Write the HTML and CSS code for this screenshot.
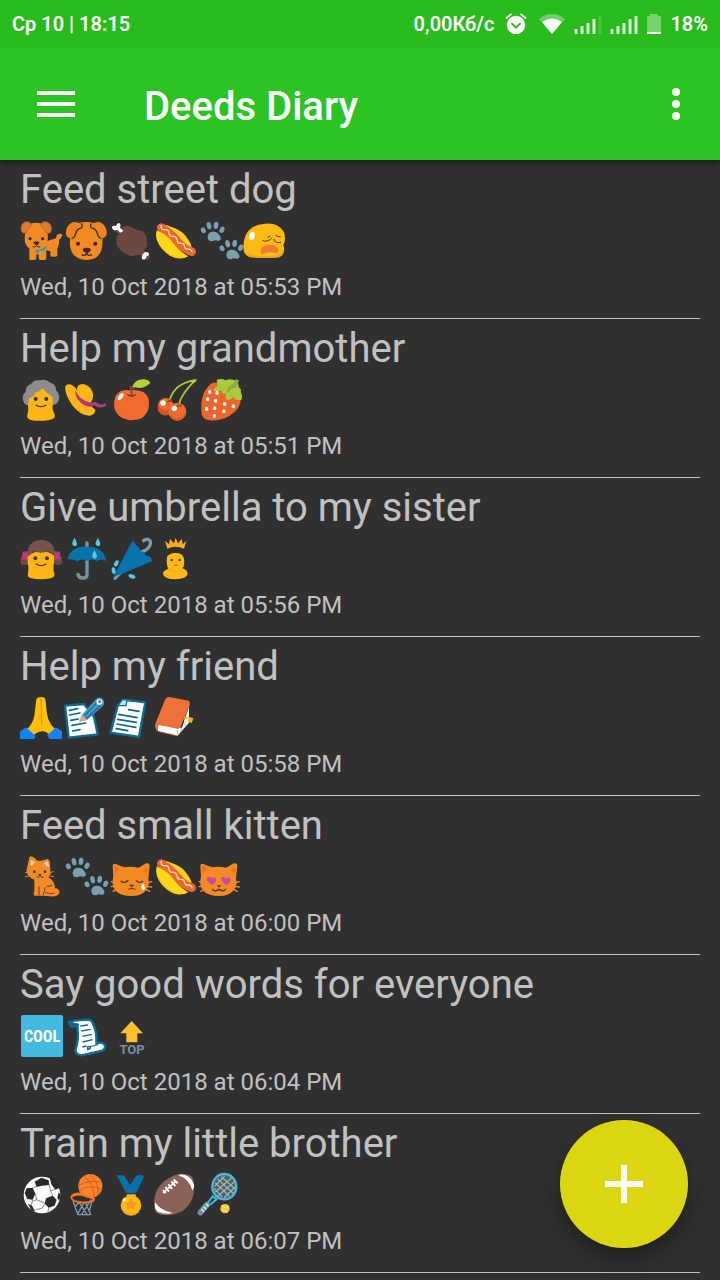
FILE: index.html
```html
<!DOCTYPE html>
<html lang="en">
<head>
    <meta charset="UTF-8">
    <meta name="viewport" content="width=device-width, initial-scale=1.0">
    <title>Deeds Diary</title>
    <link rel="stylesheet" href="styles.css">
</head>
<body>

<!-- Emoji set -->
<svg class="sprite" aria-hidden="true">
    <symbol id="dog" viewBox="0 0 135 126">
        <path d="M82 66C96 60 103 61 109 56Q108 47 116 45Q129 43 126 51Q123 60 117 62Q119 78 112 88V109Q112 113 106 113H95Q91 113 91 108V97L79 94V117Q79 123 73 123H61Q57 123 56 117V107L49 106V117Q49 123 43 123H31Q27 123 28 116V82Z" fill="#f38a24"/>
        <path d="M17 35Q20 11 48 11Q76 11 81 35Q88 64 77 80Q67 93 48 94Q22 92 16 73Q12 57 17 35" fill="#f38a24"/>
        <path d="M34 15Q26 5 14 9Q3 14 3 29Q4 43 13 43Q20 43 22 34Q24 27 32 23ZM62 15Q70 5 82 9Q94 14 95 29Q94 43 84 43Q76 43 75 34Q73 27 64 23Z" fill="#e07a2b" stroke="#8b5a35" stroke-width="2"/>
        <path d="M45 94Q66 95 80 79L79 88Q69 101 49 101Z" fill="#4298ad"/>
        <circle cx="61" cy="100" r="4" fill="#65c6e2"/>
        <g fill="#3b2b29"><circle cx="30" cy="59" r="5"/><circle cx="68" cy="59" r="5"/><path d="M40 70Q49 64 58 70Q56 79 49 79Q42 78 40 70"/></g>
        <path d="M38 83Q44 87 49 80Q54 87 61 83" fill="none" stroke="#3b2b29" stroke-width="3"/>
    </symbol>
    <symbol id="puppy" viewBox="0 0 135 126">
        <path d="M25 20Q44 8 64 9Q85 8 105 20Q115 48 112 77Q109 122 65 123Q18 121 15 77Q13 48 25 20" fill="#f38a24"/>
        <path d="M48 17Q38 6 23 10Q6 17 3 36Q0 53 14 58Q27 59 31 43Q33 32 46 25ZM81 17Q91 6 106 10Q121 17 125 36Q127 53 114 58Q101 59 98 43Q95 32 83 25Z" fill="#ee8425"/>
        <path d="M49 13Q57 25 43 29Q34 33 32 44Q29 57 20 59M79 13Q71 25 86 29Q95 33 97 44Q100 57 109 59" fill="none" stroke="#3b3029" stroke-width="4"/>
        <g fill="#3b2b29"><circle cx="39" cy="74" r="6"/><circle cx="91" cy="74" r="6"/><path d="M53 90Q65 82 78 90Q77 101 65 102Q54 101 53 90"/></g>
        <path d="M50 107Q60 113 65 103Q70 113 81 107" fill="none" stroke="#3b2b29" stroke-width="4"/>
    </symbol>
    <symbol id="meat" viewBox="0 0 135 126">
        <path d="M17 27L36 41M96 100L110 113" stroke="#694640" stroke-width="18" stroke-linecap="round"/>
        <path d="M38 25Q50 17 66 25Q79 34 97 36Q112 48 110 69Q115 81 103 93Q96 106 79 109Q65 114 51 107Q35 101 27 88Q17 79 20 63Q18 48 30 44Q29 34 38 25" fill="#6d4840"/>
        <path d="M22 14Q27 9 31 16Q32 22 30 26L40 35Q36 42 29 40L22 32Q16 36 10 32Q3 27 8 21Q14 20 18 21ZM95 118Q96 101 108 99Q121 100 116 109Q108 111 107 119Q99 125 95 118" fill="#fff"/>
    </symbol>
    <symbol id="hotdog" viewBox="0 0 135 126">
        <path d="M22 16Q36 18 52 25Q84 35 100 62Q108 72 110 84L84 96L20 36Z" fill="#f9ce1d"/>
        <path d="M19 26Q44 40 64 63Q84 90 110 98" fill="none" stroke="#ee672f" stroke-width="26" stroke-linecap="round"/>
        <path d="M18 19Q18 34 30 32Q40 30 42 42Q43 54 54 52Q64 51 66 63Q68 75 78 73Q88 72 89 83Q91 92 100 90Q108 90 111 98" fill="none" stroke="#ffe2b2" stroke-width="4" stroke-linecap="round"/>
        <path d="M5 34Q36 47 55 72Q76 99 100 112Q76 125 49 112Q17 95 6 64Q1 49 5 34" fill="#ffd817"/>
        <path d="M13 68Q26 95 54 109Q75 117 92 112Q72 124 48 111Q20 94 13 68" fill="#f6c719"/>
    </symbol>
    <symbol id="paws" viewBox="0 0 135 126">
        <g id="paw" fill="#78a0ae">
            <ellipse cx="10" cy="34" rx="7" ry="9" transform="rotate(-28 10 34)"/>
            <ellipse cx="27" cy="20" rx="7" ry="11" transform="rotate(-13 27 20)"/>
            <ellipse cx="48" cy="19" rx="7" ry="11" transform="rotate(9 48 19)"/>
            <ellipse cx="66" cy="32" rx="7" ry="10" transform="rotate(25 66 32)"/>
            <path d="M23 53Q24 39 38 38Q53 37 60 51Q67 63 55 66Q46 61 39 66Q23 69 23 53"/>
        </g>
        <use href="#paw" transform="translate(56 54)"/>
    </symbol>
    <symbol id="weary" viewBox="0 0 135 126">
        <path d="M58 14Q100 9 117 39Q124 64 115 78Q121 94 113 105Q104 119 57 116Q10 118 -2 101Q-9 78 1 51Q16 17 58 14" fill="#fdb914"/>
        <path d="M-3 96Q10 112 57 111Q105 113 116 92Q118 116 91 116H28Q1 116-3 96" fill="#e9a927"/>
        <ellipse cx="21" cy="51" rx="8" ry="13" fill="#fff" transform="rotate(12 21 51)"/>
        <path d="M52 64Q66 71 80 58M86 60Q92 75 108 70M76 51L68 55M92 49Q99 54 107 53" fill="none" stroke="#4e3831" stroke-width="3"/>
        <path d="M46 98Q48 79 70 77Q95 76 101 93Q100 104 90 103Q74 94 56 105Q46 107 46 98" fill="#ee7d2f"/>
    </symbol>

    <symbol id="grandma" viewBox="0 0 135 126">
        <path d="M33 18Q42 4 59 7Q78 1 91 14Q108 18 108 37Q120 49 117 63Q113 82 92 82H30Q11 83 9 66Q5 53 17 42Q15 25 33 18" fill="#8d8d8d"/>
        <path d="M24 82L27 61Q41 56 47 44Q59 40 68 31Q81 48 98 58V77Q96 94 102 104Q109 118 98 123Q82 130 63 128Q36 130 25 122Q20 118 22 110Q27 96 24 82" fill="#fdb615"/>
        <g fill="#3a302b"><circle cx="47" cy="63" r="6"/><circle cx="79" cy="63" r="6"/></g>
        <path d="M47 81Q63 91 79 81" fill="none" stroke="#3a302b" stroke-width="4"/>
        <path d="M35 81Q37 77 40 80M86 79Q88 76 92 80" fill="none" stroke="#e58520" stroke-width="3"/>
    </symbol>
    <symbol id="hat" viewBox="0 0 135 126">
        <path d="M1 25Q9 14 24 23Q37 33 36 40Q33 18 55 18Q79 23 85 51Q82 74 70 82Q81 84 91 95Q90 110 74 113Q37 111 12 66Q-2 40 1 25" fill="#fdb615"/>
        <path d="M32 37Q40 66 80 76L84 84Q64 90 45 72Q28 55 32 37" fill="#b63280"/>
        <path d="M78 76Q88 68 98 76Q108 84 122 75Q126 86 114 87Q97 91 88 82L77 85Z" fill="#ad4089"/>
    </symbol>
    <symbol id="apple" viewBox="0 0 135 126">
        <path d="M59 37Q79 34 100 42Q119 54 117 78Q117 104 96 120Q84 127 71 125Q61 129 48 124Q24 119 14 94Q9 72 18 52Q32 33 59 37" fill="#f06b2c"/>
        <path d="M52 50Q65 57 77 50Q66 60 52 50" fill="#783d2c" stroke="#5c3b2d" stroke-width="3"/>
        <path d="M65 53Q66 38 62 28Q69 28 74 34" fill="none" stroke="#755143" stroke-width="6"/>
        <path d="M67 25Q76 4 99 4Q117 4 121 15Q99 36 76 28Q69 29 67 25" fill="#b4cf38"/>
        <ellipse cx="32" cy="56" rx="6" ry="12" fill="#fff" transform="rotate(37 32 56)"/>
    </symbol>
    <symbol id="cherries" viewBox="0 0 135 126">
        <path d="M44 65Q61 14 120 7Q75 53 72 82" fill="none" stroke="#abcb3e" stroke-width="5"/>
        <path d="M103 9L119 4L124 10L115 16" fill="#c0cf41"/>
        <circle cx="32" cy="83" r="23" fill="#f06b2c"/><path d="M9 82A23 23 0 0 0 53 96L45 91L35 98L22 95" fill="#d75629"/>
        <circle cx="67" cy="101" r="27" fill="#f06b2c"/><path d="M41 107A27 27 0 0 0 94 102L83 116L60 121Z" fill="#df5928"/>
        <path d="M37 73Q45 66 50 71M66 87Q74 79 80 84" stroke="#93412e" stroke-width="5" fill="none"/>
        <circle cx="24" cy="75" r="8" fill="#fff"/><circle cx="58" cy="91" r="8" fill="#fff"/>
    </symbol>
    <symbol id="strawberry" viewBox="0 0 135 126">
        <path d="M50 14Q74 6 94 19Q122 34 122 62Q125 89 89 113Q60 130 28 127Q5 124 4 101Q0 52 24 26Q36 11 50 14" fill="#ed652e"/>
        <path d="M50 6Q64 0 76 7Q94-1 108 9Q118 18 116 28Q125 33 122 42Q129 54 124 66Q105 68 100 56Q89 70 80 65Q74 57 79 48Q63 46 65 36Q47 44 40 36L53 22Z" fill="#aacc3b"/>
        <path d="M80 41Q84 22 99 19L105 6Q112 2 117 9L108 29Q92 29 86 44Z" fill="#8fae38"/>
        <g fill="#fff"><ellipse cx="29" cy="42" rx="5" ry="6"/><ellipse cx="51" cy="45" rx="5" ry="6"/><ellipse cx="23" cy="64" rx="5" ry="6"/><ellipse cx="47" cy="68" rx="5" ry="6"/><ellipse cx="74" cy="78" rx="5" ry="6"/><ellipse cx="20" cy="93" rx="5" ry="6"/><ellipse cx="44" cy="91" rx="5" ry="6"/><ellipse cx="72" cy="100" rx="5" ry="6"/><ellipse cx="43" cy="114" rx="5" ry="6"/><ellipse cx="100" cy="85" rx="5" ry="6"/></g>
    </symbol>

    <symbol id="girl" viewBox="0 0 135 126">
        <path d="M26 44Q10 38 7 54Q-1 63 3 82Q14 86 25 81M101 44Q117 38 121 54Q129 63 124 82Q114 86 103 81" fill="#6c4c45"/>
        <path d="M6 42L15 48L22 42V70L13 65L4 70L9 56ZM121 42L112 48L105 42V70L114 65L123 70L118 56Z" fill="#cd3284"/>
        <path d="M23 53L47 45H82L103 53L102 79Q98 99 103 109Q106 121 92 124Q62 130 34 124Q20 120 24 109Q28 93 23 78Z" fill="#fdb615"/>
        <path d="M23 59Q20 29 38 16Q63 0 89 16Q107 31 104 58Q93 51 86 43Q62 51 40 43Q34 54 23 59" fill="#75534b"/>
        <circle cx="46" cy="64" r="6" fill="#493526"/><circle cx="81" cy="64" r="6" fill="#493526"/>
        <path d="M47 80Q63 92 79 80" fill="none" stroke="#483625" stroke-width="4"/>
    </symbol>
    <symbol id="umbrella" viewBox="0 0 135 126">
        <path d="M66 18V113Q66 123 54 123Q41 123 39 112" fill="none" stroke="#7395a2" stroke-width="10" stroke-linecap="round"/>
        <path d="M8 68Q13 34 52 29Q104 25 120 57Q124 65 122 72Q111 63 94 72Q81 61 67 72Q51 62 37 73Q22 64 8 68" fill="#0873aa"/>
        <g fill="#58c5e4"><path id="drop" d="M29 2Q20 17 22 22Q24 28 30 28Q37 26 36 20Q34 12 29 2"/><use href="#drop" x="70"/><use href="#drop" x="60" y="37"/></g>
    </symbol>
    <symbol id="closed-umbrella" viewBox="0 0 135 126">
        <path d="M15 124L96 44L104 41Q124 30 121 13Q115 1 101 11" fill="none" stroke="#7c9ba6" stroke-width="10" stroke-linecap="round"/>
        <path d="M11 119L30 81L67 12Q74 12 78 25Q89 30 92 44Q102 42 107 56Q119 55 125 66L126 73L35 111Z" fill="#0873ac"/>
        <g fill="#5cc5e4"><ellipse cx="19" cy="79" rx="6" ry="10" transform="rotate(25 19 79)"/><ellipse cx="11" cy="101" rx="6" ry="10" transform="rotate(-8 11 101)"/><ellipse cx="66" cy="118" rx="11" ry="6" transform="rotate(20 66 118)"/></g>
    </symbol>
    <symbol id="princess" viewBox="4 0 135 126">
        <path d="M34 11L46 22L49 6L61 19L66 3L73 19L84 6L87 22L98 11L91 35Q65 24 41 35Z" fill="#f8ac28"/>
        <path d="M41 57Q51 48 62 48Q88 46 91 65Q94 89 86 93Q102 99 102 111Q99 126 66 127Q30 126 28 110Q27 101 44 96Q36 80 41 57" fill="#fdbb13"/>
        <circle cx="54" cy="69" r="4" fill="#63422c"/><circle cx="78" cy="69" r="4" fill="#63422c"/>
        <path d="M58 84Q66 81 74 84Q66 91 58 84" fill="#e25c31"/>
        <path d="M46 98Q64 109 86 98" stroke="#eaa928" stroke-width="3" fill="none"/>
    </symbol>

    <symbol id="pray" viewBox="0 0 135 126">
        <path d="M49 10Q52 3 62 3Q73 1 76 10L81 54Q83 70 94 88L108 101L91 119Q78 105 67 106Q54 105 38 120L19 101Q39 83 43 59Z" fill="#ffbf0a"/>
        <path d="M63 4L65 86" stroke="#e99415" stroke-width="4"/>
        <path d="M0 107L18 94L47 120L42 129H0ZM82 118L108 94L126 106V129H88Z" fill="#1084fa"/>
    </symbol>
    <symbol id="memo" viewBox="4 0 135 126">
        <path d="M4 29L61 24L91 62L102 115L15 125Z" fill="#fff" stroke="#0e6991" stroke-width="7" stroke-linejoin="round"/>
        <path d="M17 43L42 38M18 57L49 51M21 73L44 69M25 88L66 81M27 105L49 101" stroke="#0c6892" stroke-width="5" stroke-linecap="round"/>
        <path d="M55 56L95 11Q108-2 119 12Q126 24 114 33L70 72L48 77Z" fill="#429dc3"/>
        <path d="M63 59L99 20M67 69L111 28" stroke="#116d98" stroke-width="4"/><path d="M53 57L71 71L46 78Z" fill="#d9aa91"/>
        <circle cx="107" cy="18" r="9" fill="#e9eff1"/><circle cx="108" cy="17" r="4" fill="#526978"/>
    </symbol>
    <symbol id="page" viewBox="4 0 135 126">
        <path d="M43 11L110 19L91 123L6 110L27 29Z" fill="#fff" stroke="#0e6b94" stroke-width="7" stroke-linejoin="round"/>
        <path d="M42 10L55 12L52 29L28 29Z" fill="#bce3ef" stroke="#136993" stroke-width="4"/>
        <path d="M60 41L91 46M30 55L85 65M27 70L83 79M25 84L81 94M23 98L57 104" stroke="#11658d" stroke-width="5" stroke-linecap="round"/>
    </symbol>
    <symbol id="book" viewBox="0 0 135 126">
        <path d="M90 62L115 66L110 80L87 74Z" fill="#f5aa21"/>
        <path d="M7 86L81 95L102 32V80L67 120L8 106Z" fill="#fff"/>
        <path d="M67 101L68 119M79 96L78 107M90 76L90 92" stroke="#b7bdc0" stroke-width="3"/>
        <path d="M1 83L31 9Q37 1 47 4L101 14Q107 20 103 31L76 94L70 99L11 86L7 105Q-1 98 1 83" fill="#ef713a"/>
        <path d="M8 106L67 120" fill="none" stroke="#b84e2b" stroke-width="3"/>
        <path d="M88 62L115 66L110 80L98 77L101 68L88 67Z" fill="#f5aa21"/>
    </symbol>

    <symbol id="cat" viewBox="0 0 135 126">
        <path d="M78 115Q107 123 112 111Q110 102 94 109" fill="none" stroke="#f38a24" stroke-width="13" stroke-linecap="round"/>
        <path d="M43 73L81 64Q107 78 105 105Q103 122 83 122H44Q39 120 43 108Z" fill="#f38a24"/>
        <path d="M19 47L29 5Q35 0 52 17H65L83 12Q91 17 90 31L92 57Q83 75 55 75Q25 74 19 47" fill="#f38a24"/>
        <path d="M33 14L45 22Q39 32 31 32ZM71 24L83 18L87 37Q79 34 71 24" fill="#ffd2ad"/>
        <path d="M57 94V121M76 97L70 120M97 90Q91 94 80 94" stroke="#63402a" stroke-width="3" fill="none"/>
        <circle cx="43" cy="50" r="4" fill="#49332a"/><circle cx="75" cy="50" r="4" fill="#49332a"/>
        <path d="M51 66Q56 70 60 62Q64 70 70 66" fill="none" stroke="#49332a" stroke-width="3"/>
        <path d="M54 57H66L60 63Z" fill="#49332a"/>
        <path d="M15 52L25 55M15 65L27 63M89 54L101 49M88 63L102 65" stroke="#e48624" stroke-width="3"/>
        <path d="M76 112Q92 120 104 114" fill="none" stroke="#754522" stroke-width="3"/>
    </symbol>
    <symbol id="cat-face" viewBox="0 0 135 126">
        <path d="M10 65L8 31Q10 22 22 29L43 37Q63 33 86 38L108 25Q118 23 119 31L115 72Q121 91 106 108Q93 123 65 123Q30 123 14 104Q4 87 10 65" fill="#f38a24"/>
        <path d="M13 36Q21 30 28 43L16 55ZM113 36L100 45L111 55" fill="#ed7026"/>
        <path d="M4 80L19 84M4 95L19 93M9 109L22 103M110 84L125 80M109 94L125 96M108 103L119 109" stroke="#f38a24" stroke-width="4" stroke-linecap="round"/>
    </symbol>
    <symbol id="crying-cat" viewBox="0 0 135 126">
        <use href="#cat-face" width="135" height="126"/>
        <path d="M32 78Q44 87 55 76M78 76Q88 87 99 78" fill="none" stroke="#4f352a" stroke-width="4"/>
        <path d="M58 90H72L65 96ZM54 103Q65 96 77 103" fill="#664129" stroke="#654029" stroke-width="2"/>
        <path d="M98 85Q91 99 95 103Q101 108 105 101Q106 94 98 85" fill="#e2f6ff"/>
    </symbol>
    <symbol id="heart-cat" viewBox="7 0 135 126">
        <use href="#cat-face" width="135" height="126"/>
        <path id="heart" d="M42 91L29 78Q24 66 33 65Q39 65 42 71Q50 63 55 71Q58 81 42 91" fill="#c94aa0"/>
        <use href="#heart" x="43"/>
        <path d="M44 101Q48 113 64 103Q80 113 84 101" fill="none" stroke="#513429" stroke-width="4"/>
        <path d="M57 91H71L64 98Z" fill="#5a3728"/>
    </symbol>

    <symbol id="scroll" viewBox="0 0 135 126">
        <path d="M21 24Q6 19 14 30L37 36Q43 75 31 109Q34 123 49 124L109 111Q122 107 120 94Q111 81 94 89Q97 55 82 25Q79 17 67 17L26 20Z" fill="#fff" stroke="#0d6e9c" stroke-width="7" stroke-linejoin="round"/>
        <path d="M12 24Q8 43 25 42L39 38L43 29Z" fill="#11658d"/>
        <path d="M46 36L69 33M49 51L77 46M52 67L81 61M53 84L83 77M52 99L65 96" stroke="#146994" stroke-width="4"/>
        <path d="M69 109Q64 94 76 98Q78 104 70 105" fill="#bfe0ed" stroke="#11658d" stroke-width="4"/>
        <path d="M74 98L100 92" stroke="#11658d" stroke-width="3"/>
    </symbol>

    <symbol id="soccer" viewBox="0 0 135 126">
        <circle cx="66" cy="66" r="55" fill="#fafafa"/>
        <g fill="#292929"><path d="M20 46L38 44L46 62L38 80L22 78L14 60ZM78 76L98 68L110 80L104 98L86 104L74 92ZM44 26L64 14L86 22L88 36L66 38L50 42ZM88 10Q110 18 120 44L106 50L94 34ZM24 92L36 98L46 116L34 112ZM116 58L122 66L118 84L112 74Z"/></g>
        <path d="M38 44L50 40M46 62L50 80L74 90M88 36L92 54L98 68M38 80L34 98M50 80L40 84M74 92L66 106L46 110M86 104L84 116M92 54L106 48" stroke="#555" stroke-width="2" fill="none"/>
    </symbol>
    <symbol id="basketball" viewBox="4 0 135 126">
        <path d="M28 84L43 126M45 86L72 127M64 86L82 126M82 80L53 126M61 88L41 125M34 102L47 87M76 117L85 83M43 125H80" stroke="#819ca8" stroke-width="4" fill="none"/>
        <path d="M23 73C30 50 91 67 91 80C81 95 22 88 23 73Z" fill="none" stroke="#f37023" stroke-width="6"/>
        <circle cx="80" cy="39" r="36" fill="#fa8427"/>
        <path d="M46 36Q83 19 112 28M47 56Q75 28 115 51M61 9Q91 32 91 73M80 4Q110 36 102 65" stroke="#d65d27" stroke-width="3" fill="none"/>
        <path d="M25 70Q38 62 56 66Q79 70 90 79" fill="none" stroke="#f57a25" stroke-width="6"/>
    </symbol>
    <symbol id="medal" viewBox="0 0 135 126">
        <path d="M20 7H42L63 42L55 59H48ZM80 7H97L102 12L78 61H54L49 53Z" fill="#0871aa"/>
        <path d="M50 64H77V79H50Z" fill="#f6bd20"/><path d="M54 69H73" stroke="#fff0a0" stroke-width="3"/>
        <circle cx="63" cy="97" r="31" fill="#f8aa21"/><circle cx="63" cy="95" r="25" fill="#ffbd12"/>
        <path d="M63 76L69 88L82 90L73 99L75 112L63 106L51 112L53 99L44 90L57 88Z" fill="#f59a29"/>
        <circle cx="43" cy="80" r="5" fill="#fff5bf"/>
    </symbol>
    <symbol id="football" viewBox="0 0 135 126">
        <path d="M44 14Q72-3 99 5Q111 7 115 20Q123 57 107 87Q91 116 61 123Q25 132 4 119Q-8 103 0 68Q9 31 44 14" fill="#8c6157"/>
        <path d="M70 7Q102 18 112 52Q121 40 115 29Q103 5 78 4M1 88Q12 110 53 120Q33 125 9 117Q-4 107 1 88" fill="#fff"/>
        <path d="M24 60L61 26" stroke="#fff" stroke-width="5"/><path d="M24 51L32 61M31 42L42 56M40 34L51 48M49 25L61 39M56 19L68 31" stroke="#fff" stroke-width="6"/>
    </symbol>
    <symbol id="tennis" viewBox="4 0 135 126">
        <path d="M5 119L25 95" stroke="#6c929e" stroke-width="17" stroke-linecap="round"/>
        <path d="M8 108L16 117M15 101L23 109M22 93L30 100" stroke="#d8e9ed" stroke-width="5"/>
        <path d="M27 90L42 70L54 79L34 95" fill="none" stroke="#43b9df" stroke-width="6"/>
        <ellipse cx="77" cy="41" rx="36" ry="38" fill="#4b6269" stroke="#48b9dc" stroke-width="7"/>
        <path d="M50 29L92 69M57 18L105 62M68 11L109 47M47 46L71 73M50 57L99 14M58 69L109 25M76 74L110 41M48 40L78 10" stroke="#a1b3af" stroke-width="4"/>
        <circle cx="79" cy="107" r="14" fill="#fdc43a"/><path d="M70 97Q78 110 91 100M68 112Q78 106 86 118" stroke="#fff0a1" stroke-width="3" fill="none"/>
    </symbol>
</svg>

<div class="status-bar">
    <span>Ср 10 | 18:15</span>
    <div class="status-icons">
        <span>0,00Кб/с</span>
        <svg class="alarm" viewBox="0 0 24 24" aria-label="Alarm"><circle cx="12" cy="13" r="10" fill="#fff"/><path d="M1 6L7 1M17 1L23 6" stroke="#fff" stroke-width="2"/><path d="M7 11L12 16L17 11" fill="none" stroke="#28bb1b" stroke-width="2"/></svg>
        <svg class="wifi" viewBox="0 0 28 22" aria-label="Wi-Fi"><path d="M1 6Q14-4 27 6L14 21Z" fill="#fff" fill-opacity=".35"/><path d="M4 9Q14 2 24 9L14 21Z" fill="#fff"/></svg>
        <svg class="signal" viewBox="0 0 28 22" aria-label="Signal"><path d="M2 21V16M8 21V13M14 21V10M20 21V6" stroke="#fff" stroke-opacity=".8" stroke-width="3"/><path d="M26 21V3" stroke="#fff" stroke-opacity=".15" stroke-width="3"/></svg>
        <svg class="signal" viewBox="0 0 28 22" aria-label="Signal"><path d="M2 21V16M8 21V13M14 21V10M20 21V6M26 21V3" stroke="#fff" stroke-opacity=".8" stroke-width="3"/></svg>
        <svg class="battery" viewBox="0 0 16 22" aria-label="Battery"><path d="M1 3H4V1H12V3H15V19H1Z" fill="#fff" fill-opacity=".35"/><path d="M1 19H15V21H1Z" fill="#fff"/></svg>
        <span>18%</span>
    </div>
</div>

<header class="toolbar">
    <button class="icon-button menu-button" aria-label="Menu">
        <svg viewBox="0 0 38 26"><path d="M0 2H38M0 13H38M0 24H38" stroke="#fff" stroke-width="4"/></svg>
    </button>
    <h1>Deeds Diary</h1>
    <button class="icon-button more-button" aria-label="More options">
        <svg viewBox="0 0 8 32"><g fill="#fff"><circle cx="4" cy="4" r="4"/><circle cx="4" cy="16" r="4"/><circle cx="4" cy="28" r="4"/></g></svg>
    </button>
</header>

<ul class="deeds">
    <li>
        <h2>Feed street dog</h2>
        <div class="emojis">
            <svg><use href="#dog"/></svg>
            <svg><use href="#puppy"/></svg>
            <svg><use href="#meat"/></svg>
            <svg><use href="#hotdog"/></svg>
            <svg><use href="#paws"/></svg>
            <svg><use href="#weary"/></svg>
        </div>
        <time>Wed, 10 Oct 2018 at 05:53 PM</time>
    </li>
    <li>
        <h2>Help my grandmother</h2>
        <div class="emojis">
            <svg><use href="#grandma"/></svg>
            <svg><use href="#hat"/></svg>
            <svg><use href="#apple"/></svg>
            <svg><use href="#cherries"/></svg>
            <svg><use href="#strawberry"/></svg>
        </div>
        <time>Wed, 10 Oct 2018 at 05:51 PM</time>
    </li>
    <li>
        <h2>Give umbrella to my sister</h2>
        <div class="emojis">
            <svg><use href="#girl"/></svg>
            <svg><use href="#umbrella"/></svg>
            <svg><use href="#closed-umbrella"/></svg>
            <svg><use href="#princess"/></svg>
        </div>
        <time>Wed, 10 Oct 2018 at 05:56 PM</time>
    </li>
    <li>
        <h2>Help my friend</h2>
        <div class="emojis">
            <svg><use href="#pray"/></svg>
            <svg><use href="#memo"/></svg>
            <svg><use href="#page"/></svg>
            <svg><use href="#book"/></svg>
        </div>
        <time>Wed, 10 Oct 2018 at 05:58 PM</time>
    </li>
    <li>
        <h2>Feed small kitten</h2>
        <div class="emojis">
            <svg><use href="#cat"/></svg>
            <svg><use href="#paws"/></svg>
            <svg><use href="#crying-cat"/></svg>
            <svg><use href="#hotdog"/></svg>
            <svg><use href="#heart-cat"/></svg>
        </div>
        <time>Wed, 10 Oct 2018 at 06:00 PM</time>
    </li>
    <li>
        <h2>Say good words for everyone</h2>
        <div class="emojis">
            <svg viewBox="0 0 135 126">
                <rect x="3" y="3" width="126" height="126" rx="6" fill="#43b9df"/>
                <text x="66" y="84" class="cool-text">COOL</text>
            </svg>
            <svg><use href="#scroll"/></svg>
            <svg viewBox="0 0 135 126">
                <path d="M65 21L99 58H82V85H49V58H31Z" fill="#fdc02f"/>
                <text x="66" y="121" class="top-text">TOP</text>
            </svg>
        </div>
        <time>Wed, 10 Oct 2018 at 06:04 PM</time>
    </li>
    <li>
        <h2>Train my little brother</h2>
        <div class="emojis">
            <svg><use href="#soccer"/></svg>
            <svg><use href="#basketball"/></svg>
            <svg><use href="#medal"/></svg>
            <svg><use href="#football"/></svg>
            <svg><use href="#tennis"/></svg>
        </div>
        <time>Wed, 10 Oct 2018 at 06:07 PM</time>
    </li>
</ul>

<button class="add-button" aria-label="Add deed">
    <svg viewBox="0 0 38 38"><path d="M19 0V38M0 19H38" stroke="#fff" stroke-width="6"/></svg>
</button>

</body>
</html>
```
FILE: styles.css
```css
body {
  font-family: Roboto, sans-serif;
  margin: 0;
  background-color: #303030;
  color: #c1c1c1;
}

.sprite {
  position: absolute;
  width: 0;
  height: 0;
}

symbol {
  overflow: visible;
}

/* Status bar */
.status-bar {
  display: flex;
  align-items: center;
  justify-content: space-between;
  position: relative;
  z-index: 1;
  height: 48px;
  padding: 0 12px;
  background-color: #28bb1b;
  color: white;
  font-size: 20px;
  font-weight: 600;
}

.status-icons {
  display: flex;
  align-items: center;
  gap: 8px;
}

.status-icons svg {
  height: 22px;
}

.alarm {
  width: 28px;
}

.wifi,
.signal {
  width: 28px;
}

.battery {
  width: 16px;
}

/* Toolbar */
.toolbar {
  display: flex;
  align-items: center;
  position: relative;
  height: 112px;
  background-color: #2bc423;
  color: white;
  box-shadow: 0 2px 6px rgba(0, 0, 0, 0.5);
}

.toolbar h1 {
  flex: 1;
  margin: 0;
  padding: 4px 0 0 32px;
  font-size: 40px;
  font-weight: 500;
}

.icon-button {
  display: flex;
  align-items: center;
  justify-content: center;
  height: 112px;
  padding: 0;
  border: none;
  background: none;
  cursor: pointer;
}

.menu-button {
  width: 112px;
}

.menu-button svg {
  width: 38px;
  height: 26px;
}

.more-button {
  width: 88px;
}

.more-button svg {
  width: 8px;
  height: 32px;
}

/* Deeds list */
.deeds {
  list-style: none;
  margin: 0;
  padding: 0 20px;
}

.deeds li {
  padding: 6px 0 17px;
  border-bottom: 1px solid #c1c1c1;
}

.deeds h2 {
  margin: 0;
  font-size: 40px;
  font-weight: normal;
  line-height: 48px;
}

.deeds time {
  display: block;
  font-size: 24px;
  line-height: 28px;
}

.emojis {
  display: flex;
  margin: 5px 0 12px;
}

.emojis svg {
  width: 45px;
  height: 42px;
  overflow: visible;
}

.cool-text {
  font-family: "Liberation Sans Narrow", "Roboto Condensed", Roboto, sans-serif;
  font-size: 48px;
  font-weight: bold;
  fill: white;
  text-anchor: middle;
}

.top-text {
  font-size: 39px;
  font-weight: bold;
  fill: #78909c;
  text-anchor: middle;
}

/* Floating button */
.add-button {
  display: flex;
  align-items: center;
  justify-content: center;
  position: fixed;
  right: 32px;
  bottom: 32px;
  width: 128px;
  height: 128px;
  padding: 0;
  border: none;
  border-radius: 50%;
  background-color: #dcd612;
  box-shadow: 0 10px 20px rgba(0, 0, 0, 0.35);
  cursor: pointer;
}

.add-button svg {
  width: 38px;
  height: 38px;
}
```
